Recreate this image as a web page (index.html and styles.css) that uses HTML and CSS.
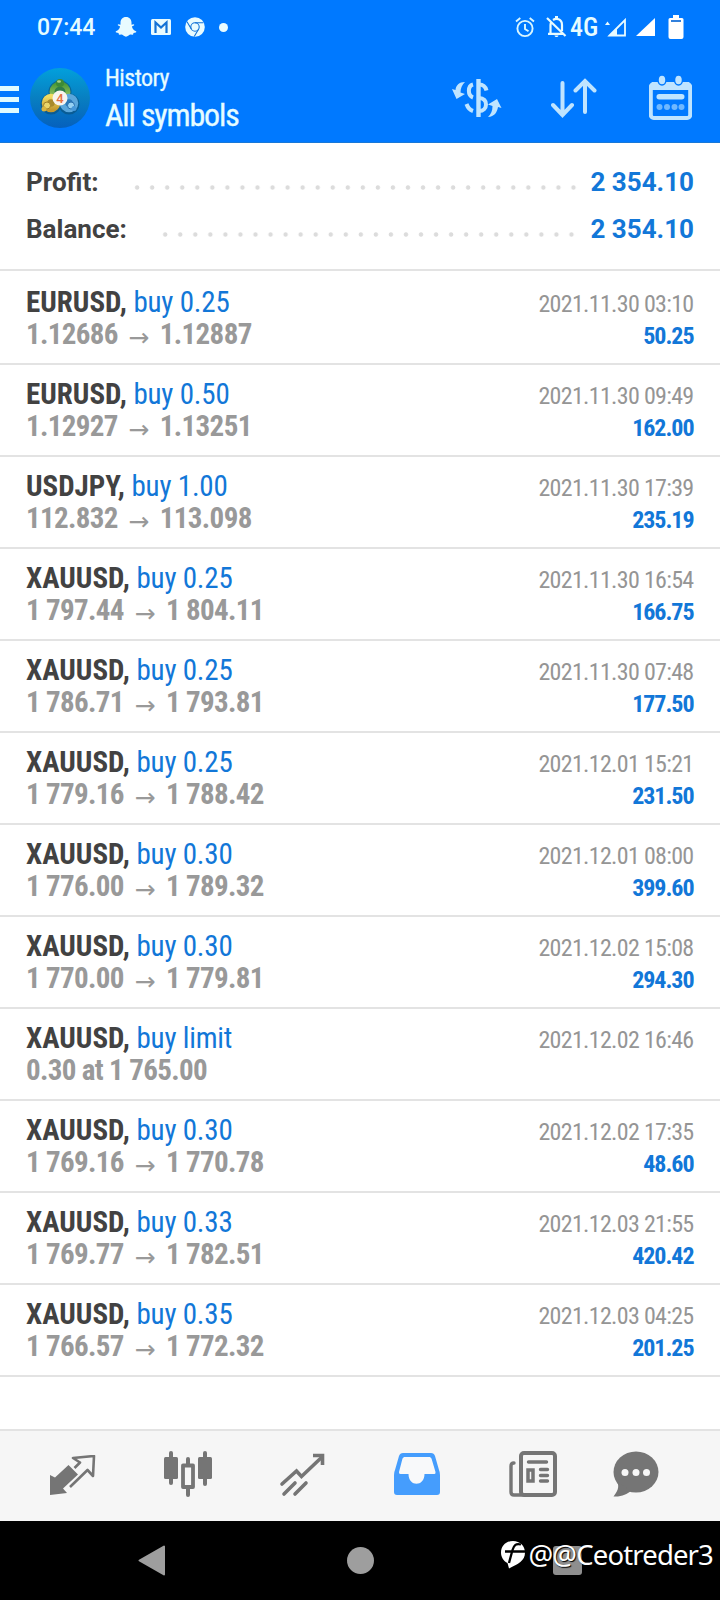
FILE: index.html
```
<!DOCTYPE html>
<html lang="en">
<head>
<meta charset="utf-8">
<title>History</title>
<link rel="stylesheet" href="styles.css">
</head>
<body>
<header class="header">
  <div class="status">
    <span class="clock">07:44</span>
    <svg class="snap" width="22" height="22" viewBox="0 0 22 22"><path fill="#e8fbff" d="M11 1c3.600 0 5.500 2.500 5.500 5.500v2.200l2-.5c.8 0 1 .9.300 1.300l-1.900 1c.6 2.400 2 4 4.100 4.700.5.300.4.900-.2 1.200l-2.300.7-.5 1.600-2.800-.1c-1.400.6-2.400 2.100-4.200 2.100s-2.800-1.500-4.200-2.100l-2.800.1-.5-1.600L1.200 16.400c-.6-.3-.7-.9-.2-1.200 2.100-.7 3.500-2.300 4.100-4.700l-1.900-1c-.7-.4-.5-1.300.3-1.300l2 .5V6.500C5.500 3.500 7.400 1 11 1z"/></svg>
    <svg class="gmail" width="20" height="16" viewBox="0 0 20 16"><path fill="#e8fbff" d="M1.500 0h17Q20 0 20 1.500v13q0 1.500-1.500 1.500h-17Q0 16 0 14.500v-13Q0 0 1.500 0z"/><path fill="none" stroke="#1272d6" stroke-width="2.200" d="M4.500 14V3.500L10 8.500l5.500-5V14"/></svg>
    <svg class="chrome" width="20" height="20" viewBox="0 0 20 20"><circle cx="10" cy="10" r="9.800" fill="#e8fbff"/><g fill="none" stroke="#1272d6" stroke-width="1.100"><circle cx="10" cy="10" r="4.200"/><path d="M10 5.800h8.500M6.300 12 2 4.800M13.700 12l-4.500 7.500"/></g></svg>
    <span class="dot"></span>
    <span class="spacer"></span>
    <svg class="alarm" width="20" height="21" viewBox="0 0 20 21"><g fill="none" stroke="#d9f6ff" stroke-width="1.900"><circle cx="10" cy="11.500" r="7.600"/><path d="M10 7v5l3.500 2.200M1 4.500 5.300 1M19 4.500 14.700 1"/></g></svg>
    <svg class="bell" width="21" height="22" viewBox="0 0 21 22"><path fill="none" stroke="#e8fbff" stroke-width="2.200" d="M1 2l18.500 18M4.500 17.500V9c0-1.200.3-2.200.9-3M7 4c3-2 9-1.500 9 5v6M2 17.800h15"/><path fill="#e8fbff" d="M9 0h3v4H9zM8.500 19.500h4c-.5 2-3.500 2-4 0z"/></svg>
    <span class="net">4G</span>
    <svg class="sig1" width="22" height="19" viewBox="0 0 22 19"><path fill="#e8fbff" d="M0 7l2.500-3.500L5 7z"/><path fill="none" stroke="#e8fbff" stroke-width="1.800" d="M4.500 17.500 20 2v15.500z"/><path fill="#e8fbff" d="M4 18 12 10v8z"/></svg>
    <svg class="sig2" width="20" height="19" viewBox="0 0 20 19"><path fill="#fff" d="M0 18 19 0v18z"/></svg>
    <svg class="batt" width="16" height="25" viewBox="0 0 16 25"><path fill="#fff" d="M5 0h6v3H5zM2 3h12q1.500 0 1.500 1.500V22q0 2-2 2h-11q-2 0-2-2V4.500Q.5 3 2 3z"/><path fill="#3180dc" d="M3 5h10v2H3z"/></svg>
  </div>
  <div class="toolbar">
    <svg class="burger" width="19" height="28" viewBox="0 0 19 28"><path fill="#e0fbff" d="M0 0h19v5H0zM0 11h19v5H0zM0 22h19v5H0z"/></svg>
    <svg class="logo" width="60" height="60" viewBox="0 0 60 60">
      <defs>
        <linearGradient id="disc" x1="0" y1="0" x2="0" y2="1"><stop offset="0" stop-color="#02a0dc"/><stop offset=".5" stop-color="#087fc1"/><stop offset="1" stop-color="#0560bd"/></linearGradient>
        <linearGradient id="gold" x1="0" y1="0" x2="0" y2="1"><stop offset="0" stop-color="#f0dc62"/><stop offset="1" stop-color="#c49a30"/></linearGradient>
        <linearGradient id="leaf" x1="0" y1="0" x2="0" y2="1"><stop offset="0" stop-color="#4c9a38"/><stop offset="1" stop-color="#a8ce70"/></linearGradient>
      </defs>
      <circle cx="30" cy="30" r="30" fill="url(#disc)"/>
      <g fill="none" stroke="#0b4f78" stroke-width="7" opacity=".6"><circle cx="30" cy="24" r="8"/><circle cx="21" cy="36" r="7"/><circle cx="39" cy="36" r="7"/></g>
      <circle cx="30" cy="24" r="8" fill="#2f7d4a" stroke="url(#leaf)" stroke-width="5"/>
      <circle cx="21" cy="35" r="6.500" fill="#a98a2c" stroke="url(#gold)" stroke-width="5.500"/>
      <circle cx="39" cy="35" r="6.500" fill="#2a78b8" stroke="#5ba7dc" stroke-width="5.500"/>
      <circle cx="30" cy="15" r="4" fill="#3d8b37"/><ellipse cx="29" cy="13.500" rx="2" ry="1.200" fill="#a9d28a"/>
      <circle cx="17" cy="37.500" r="3.500" fill="#ead56a" stroke="#a08128"/><circle cx="14" cy="41" r="2.500" fill="#d9b541"/>
      <circle cx="41" cy="37.500" r="3.500" fill="#96d1f3" stroke="#266dad"/><circle cx="44" cy="40.500" r="2.500" fill="#4798da"/>
      <circle cx="30" cy="30" r="7.500" fill="#f7f4ef"/>
      <text x="30" y="34.500" text-anchor="middle" class="four">4</text>
    </svg>
    <div class="titles"><div class="sub">History</div><div class="title">All symbols</div></div>
    <svg class="act-currency" width="50" height="40" viewBox="0 0 50 40"><path fill="none" stroke="#bfe4ff" stroke-width="4.400" d="M26.500 1v38"/><g fill="none" stroke="#bfe4ff" stroke-width="4"><path d="M27 6.500c4.500 0 6.500 2 7.500 6M27 20c5 0 7 3 7 6.500S31.500 33 27 33M21 6.500c-5.500 1.500-5.500 11 0 13M14.500 26c1.200 3.500 3 5.800 6.500 7"/></g><path fill="#bfe4ff" d="M13 4C7 4 4 7.500 3.500 12L0 11l4.500 10L13 16l-4.500-1.500C8.500 10 10 7 13 4zM36 39c6.500-.5 9-4.500 10-10l3.500 1L45 21l-9 5.500 4.500 1.500c0 5-1.500 8-4.500 11z"/></svg>
    <svg class="act-sort" width="46" height="40" viewBox="0 0 46 40"><path fill="none" stroke="#bfe4ff" stroke-width="4" stroke-linecap="round" d="M11.500 5v32M2 27l9.500 10L21 27M34 34V3M24.500 12.500 34 3l9.500 9.500"/></svg>
    <svg class="act-cal" width="43" height="45" viewBox="0 0 43 45"><rect x="1.800" y="9" width="39.400" height="34" rx="3" fill="none" stroke="#bfe4ff" stroke-width="4"/><path fill="#bfe4ff" d="M3 7h37v8H3z"/><g fill="#bfe4ff" stroke="#0079ff" stroke-width="1.500"><ellipse cx="13" cy="5" rx="4" ry="5"/><ellipse cx="29.500" cy="5" rx="4" ry="5"/></g><rect x="7.500" y="19" width="28" height="5.500" rx="2.700" fill="#bfe4ff"/><g fill="#6fb8ff"><circle cx="10.500" cy="32" r="3"/><circle cx="18" cy="32" r="3"/><circle cx="25.500" cy="32" r="3"/><circle cx="32.500" cy="32" r="3"/></g></svg>
  </div>
</header>

<section class="summary">
  <div class="total"><span class="label">Profit:</span><span class="dots dots-profit"></span><span class="amount">2 354.10</span></div>
  <div class="total"><span class="label">Balance:</span><span class="dots dots-balance"></span><span class="amount">2 354.10</span></div>
</section>

<main class="deals">
  <div class="deal"><div class="main"><div><b>EURUSD,</b> <span class="side">buy 0.25</span></div><div class="price">1.12686 <i>→</i> 1.12887</div></div><div class="meta"><div class="date">2021.11.30 03:10</div><div class="gain">50.25</div></div></div>
  <div class="deal"><div class="main"><div><b>EURUSD,</b> <span class="side">buy 0.50</span></div><div class="price">1.12927 <i>→</i> 1.13251</div></div><div class="meta"><div class="date">2021.11.30 09:49</div><div class="gain">162.00</div></div></div>
  <div class="deal"><div class="main"><div><b>USDJPY,</b> <span class="side">buy 1.00</span></div><div class="price">112.832 <i>→</i> 113.098</div></div><div class="meta"><div class="date">2021.11.30 17:39</div><div class="gain">235.19</div></div></div>
  <div class="deal"><div class="main"><div><b>XAUUSD,</b> <span class="side">buy 0.25</span></div><div class="price">1 797.44 <i>→</i> 1 804.11</div></div><div class="meta"><div class="date">2021.11.30 16:54</div><div class="gain">166.75</div></div></div>
  <div class="deal"><div class="main"><div><b>XAUUSD,</b> <span class="side">buy 0.25</span></div><div class="price">1 786.71 <i>→</i> 1 793.81</div></div><div class="meta"><div class="date">2021.11.30 07:48</div><div class="gain">177.50</div></div></div>
  <div class="deal"><div class="main"><div><b>XAUUSD,</b> <span class="side">buy 0.25</span></div><div class="price">1 779.16 <i>→</i> 1 788.42</div></div><div class="meta"><div class="date">2021.12.01 15:21</div><div class="gain">231.50</div></div></div>
  <div class="deal"><div class="main"><div><b>XAUUSD,</b> <span class="side">buy 0.30</span></div><div class="price">1 776.00 <i>→</i> 1 789.32</div></div><div class="meta"><div class="date">2021.12.01 08:00</div><div class="gain">399.60</div></div></div>
  <div class="deal"><div class="main"><div><b>XAUUSD,</b> <span class="side">buy 0.30</span></div><div class="price">1 770.00 <i>→</i> 1 779.81</div></div><div class="meta"><div class="date">2021.12.02 15:08</div><div class="gain">294.30</div></div></div>
  <div class="deal"><div class="main"><div><b>XAUUSD,</b> <span class="side">buy limit</span></div><div class="price">0.30 at 1 765.00</div></div><div class="meta"><div class="date">2021.12.02 16:46</div></div></div>
  <div class="deal"><div class="main"><div><b>XAUUSD,</b> <span class="side">buy 0.30</span></div><div class="price">1 769.16 <i>→</i> 1 770.78</div></div><div class="meta"><div class="date">2021.12.02 17:35</div><div class="gain">48.60</div></div></div>
  <div class="deal"><div class="main"><div><b>XAUUSD,</b> <span class="side">buy 0.33</span></div><div class="price">1 769.77 <i>→</i> 1 782.51</div></div><div class="meta"><div class="date">2021.12.03 21:55</div><div class="gain">420.42</div></div></div>
  <div class="deal"><div class="main"><div><b>XAUUSD,</b> <span class="side">buy 0.35</span></div><div class="price">1 766.57 <i>→</i> 1 772.32</div></div><div class="meta"><div class="date">2021.12.03 04:25</div><div class="gain">201.25</div></div></div>
</main>

<nav class="tabs">
  <svg class="tab-quotes" width="48" height="42" viewBox="0 0 48 42"><path fill="#757575" d="M1 20l5 2.500L19.500 10 29 19.500 14 33.500l4 4.500L1 40z"/><path fill="none" stroke="#757575" stroke-width="2.600" stroke-linejoin="round" d="M25.500 13l5.500-5.500L24 3l21-2-1 20-5.500-6L21 32"/></svg>
  <svg class="tab-chart" width="48" height="47" viewBox="0 0 48 47"><g fill="#757575"><rect x="0" y="6" width="14" height="22" rx="1.500"/><rect x="5" y="0" width="4" height="34" rx="2"/><rect x="34" y="6" width="14" height="22" rx="1.500"/><rect x="39" y="0" width="4" height="35" rx="2"/><rect x="22" y="6" width="4" height="40" rx="2"/></g><rect x="19" y="14.500" width="10" height="21.500" fill="#f6f6f6" stroke="#757575" stroke-width="3.800" stroke-linejoin="round"/></svg>
  <svg class="tab-trade" width="46" height="44" viewBox="0 0 46 44"><g fill="none" stroke="#757575" stroke-width="3.600" stroke-linecap="round"><path d="M3 31 17.500 18l5 5.500L43 4M5 41l11-11M16 41l11-11"/><path stroke-linecap="butt" d="M34 2.500h9.500V12"/></g></svg>
  <svg class="tab-history" width="46" height="42" viewBox="0 0 46 42"><path fill="#459dfd" d="M9 0h28q3 0 4 3l4 14q1 2 1 5v17q0 3-3 3H3q-3 0-3-3V22q0-3 1-5L5 3q1-3 4-3z"/><path fill="#f8f9fa" d="M10 4h26l1.500 1.500L41.500 19q.3 2-1 2h-10c0 13-16 13-16 0h-8q-2 0-1.500-2L8.500 5.500z"/></svg>
  <svg class="tab-news" width="48" height="46" viewBox="0 0 48 46"><rect x="12" y="2" width="34" height="42" rx="3" fill="none" stroke="#757575" stroke-width="4"/><path fill="none" stroke="#757575" stroke-width="3.400" stroke-linecap="round" d="M5 12q-3 0-3 3v26q0 3 3 3h10M19.500 11h18M31.500 18.500h7M31.500 24.500h7M31.500 30h7"/><path fill="none" stroke="#757575" stroke-width="3.500" d="M19 19h5v11h-5z"/></svg>
  <svg class="tab-chat" width="46" height="46" viewBox="0 0 46 46"><ellipse cx="23" cy="21" rx="22.500" ry="20.500" fill="#757575"/><path fill="#757575" d="M4 31c3 5 0 10-3.500 14.500C9 46 14 43 18 40z"/><g fill="#f6f6f6"><circle cx="12" cy="21.500" r="3.500"/><circle cx="23" cy="21.500" r="3.500"/><circle cx="33.500" cy="21.500" r="3.500"/></g></svg>
</nav>

<footer class="sysnav">
  <svg class="back" width="27" height="31" viewBox="0 0 27 31"><path fill="#9e9e9e" stroke="#9e9e9e" stroke-width="2" stroke-linejoin="round" d="M1.500 15.500 26 1.500v28z"/></svg>
  <span class="home"></span>
  <span class="recent"></span>
  <div class="watermark">
    <svg width="25" height="28" viewBox="0 0 25 28"><path fill="#fff" d="M12 0C5 0 0 5 0 11.500 0 16 2.500 20 6.500 22L8 27.500C17 23 24 20 24 11.500 24 5 19 0 12 0z"/><path fill="none" stroke="#000" stroke-width="2.300" d="M20 3.500c-5-1.500-7 .5-8.500 5.500L8 22M4 10.500h20"/></svg>
    <span>@@Ceotreder3</span>
  </div>
</footer>
</body>
</html>
```
FILE: styles.css
```
* { box-sizing: border-box; }
body {
  margin: 0;
  width: 720px;
  height: 1600px;
  display: flex;
  flex-direction: column;
  background: #fff;
  font-family: "Roboto Condensed", Roboto, "Liberation Sans", sans-serif;
  font-stretch: 75%;
  overflow: hidden;
}
svg { display: block; flex: none; }

/* Header */
.header { height: 143px; flex: none; background: #0079ff; color: #e6fcff; border-bottom: 1px solid #1878d8; }
.status { height: 54px; display: flex; align-items: center; padding-left: 37px; }
.clock { width: 78px; font: 500 23px/28px Roboto, sans-serif; font-stretch: 100%; padding-top: 1px; }
.gmail { margin-left: 14px; }
.chrome { margin-left: 14px; }
.dot { width: 9px; height: 9px; margin-left: 14px; border-radius: 50%; background: #e8fbff; }
.spacer { flex: 1; }
.bell { margin-left: 11px; }
.net { width: 28px; margin: 0 7px 0 3px; font-size: 26px; line-height: 28px; font-weight: 500; white-space: nowrap; }
.sig2 { margin-left: 9px; }
.batt { margin: 0 36px 0 12px; }
.toolbar { display: flex; height: 88px; }
.burger { margin-top: 32px; }
.logo { margin: 14px 0 0 11px; }
.four { font: 500 13px Roboto, sans-serif; fill: #e57040; }
.titles { width: 362px; padding: 10px 0 0 15px; white-space: nowrap; }
.sub { font-size: 24px; line-height: 28px; letter-spacing: -.550px; -webkit-text-stroke: .3px; }
.title { font-size: 32px; line-height: 38px; margin-top: 4px; letter-spacing: -1.150px; -webkit-text-stroke: .3px; }
.act-currency { margin-top: 24px; }
.act-sort { margin: 24px 0 0 49px; }
.act-cal { margin: 21px 0 0 52px; }

/* Totals */
.summary { height: 128px; flex: none; padding: 16px 26px 0; border-bottom: 2px solid #e3e3e3; }
.total { display: flex; height: 47px; line-height: 47px; font-family: Roboto, sans-serif; font-stretch: 100%; font-size: 26px; font-weight: 700; }
.label { color: #424242; flex: 1; }
.amount { color: #1277d8; width: 104px; text-align: right; white-space: nowrap; }
.dots { height: 5px; margin-top: 26px; background: radial-gradient(circle at 50% 50%, #dcdcdc 1.800px, transparent 2.600px) right / 15.050px 5px repeat-x; }
.dots-profit { width: 451px; margin-right: 9px; }
.dots-balance { width: 421px; margin-right: 11px; }

/* Deals */
.deals { flex: 1; }
.deal { height: 92px; display: flex; justify-content: space-between; padding: 13px 26px 0; border-bottom: 2px solid #e3e3e3; font-size: 29px; line-height: 32px; white-space: nowrap; color: #424242; }
.deal:first-child { height: 94px; padding-top: 15px; }
.deal b { font-weight: 700; }
.side { color: #1277d8; letter-spacing: -.200px; }
.price { color: #999; font-weight: 700; letter-spacing: -.650px; }
.price i { display: inline-block; padding-top: 1px; vertical-align: -2px; font: normal 400 25px/20px "DejaVu Sans", sans-serif; letter-spacing: 0; margin: 0 4.500px 0 4.500px; }
.meta { padding-top: 2px; text-align: right; font-size: 24px; }
.date { color: #959595; letter-spacing: -.680px; }
.gain { color: #1277d8; font-weight: 700; letter-spacing: -1.050px; }
.date, .gain { padding-right: .5px; }

/* Bottom tabs */
.tabs { height: 92px; flex: none; display: flex; border-top: 2px solid #e3e3e3; background: #f6f6f6; }
.tab-quotes { margin: 24px 0 0 49px; }
.tab-chart { margin: 20px 0 0 67px; }
.tab-trade { margin: 22px 0 0 67px; }
.tab-history { margin: 22px 0 0 69px; }
.tab-news { margin: 20px 0 0 69px; }
.tab-chat { margin: 20px 0 0 56px; }

/* System navigation */
.sysnav { height: 79px; flex: none; display: flex; background: #000; position: relative; }
.back { margin: 24px 0 0 138px; }
.home { width: 27px; height: 27px; margin: 26px 0 0 182px; border-radius: 50%; background: #9e9e9e; }
.recent { width: 29px; height: 29px; margin: 25px 0 0 179px; border-radius: 3px; background: #8e8e8e; }
.watermark { position: absolute; right: 7px; top: 16px; display: flex; align-items: center; gap: 2px; color: #fff; font: 27.500px/36px "Noto Sans", sans-serif; letter-spacing: -.850px; text-shadow: 1px 1px 1px #000; white-space: nowrap; }
```
